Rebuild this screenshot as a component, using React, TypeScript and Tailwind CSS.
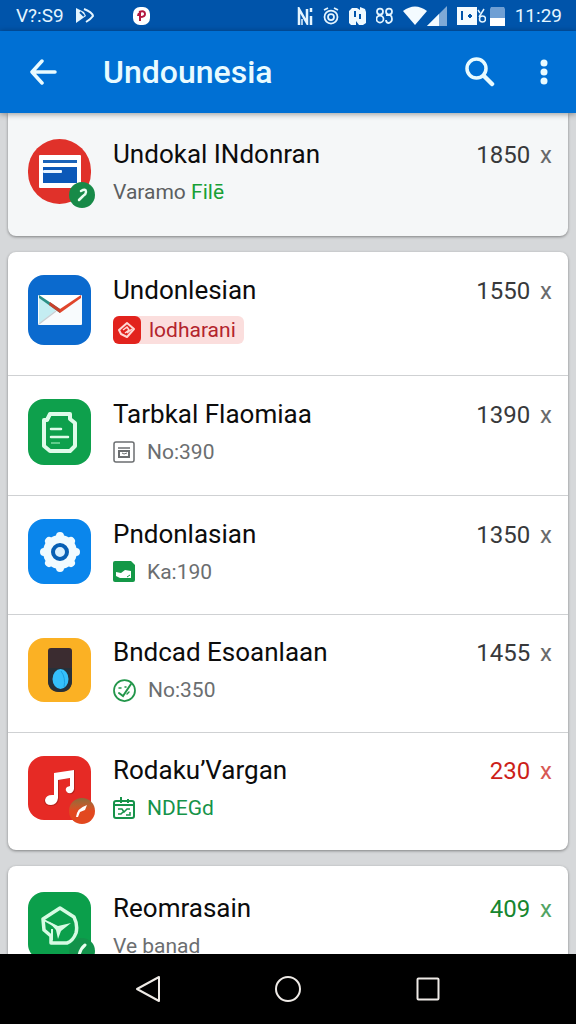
import type { ReactNode } from 'react';
import clsx from 'clsx';

interface AppEntry {
  name: string;
  count: string;
  countColor?: string;
  tile: string;
  glyph: ReactNode;
  badge?: ReactNode;
  detail: ReactNode;
}

/* ---------- tile glyphs ---------- */

function WindowGlyph() {
  return (
    <svg width="42" height="33" viewBox="0 0 42 33">
      <rect width="42" height="33" rx="1" fill="#fff" />
      <rect x="4" y="5" width="34" height="3" fill="#1b63b8" />
      <rect x="4" y="12" width="34" height="16" fill="#0b58b8" />
      <rect x="4" y="15" width="19" height="3" rx="1" fill="#e8f4ff" />
    </svg>
  );
}

function MailGlyph() {
  return (
    <svg width="44" height="30" viewBox="0 0 44 30">
      <rect width="44" height="30" rx="1" fill="#f8fbfd" />
      <path d="M1 1v28l17-14z" fill="#c4edf2" />
      <path d="M1 29l17-13" stroke="#c9ced2" strokeWidth="1.5" />
      <path d="M1 0h42L22 16z" fill="#fff" />
      <path d="M1 0l21 14v4L1 3z" fill="#2b8f86" />
      <path d="M12 7l10 7v4l-11-8z" fill="#c8412b" />
      <path d="M43 0L22 14v4L43 3z" fill="#e0452b" />
    </svg>
  );
}

function DocumentGlyph() {
  return (
    <svg width="35" height="41" viewBox="0 0 35 41" fill="none" stroke="#dffbe9" strokeLinejoin="round">
      <path d="M8 2h20v5l5 4v23l-5 5H8l-6-5V8h3z" strokeWidth="4" />
      <path d="M9 17h10M9 25h17" strokeWidth="2.5" strokeLinecap="round" />
      <path d="M9 31h9" strokeWidth="1.5" stroke="#7ddba0" />
    </svg>
  );
}

function GearGlyph() {
  return (
    <svg width="42" height="42" viewBox="0 0 42 42">
      <circle cx="21" cy="21" r="17" fill="#f1fbff" />
      <path d="M21 5v32M5 21h32M10 10l22 22M32 10L10 32" stroke="#f1fbff" strokeWidth="8" strokeLinecap="round" />
      <circle cx="21" cy="21" r="7" fill="#d9f0ff" stroke="#075fb4" strokeWidth="4" />
    </svg>
  );
}

function SwitchGlyph() {
  return (
    <svg width="26" height="44" viewBox="0 0 26 44">
      <path d="M4 0h18q3 0 3 3v29q0 12-12 12T1 32V3q0-3 3-3z" fill="#3b2c30" />
      <path d="M1 20h24v12q0 12-12 12T1 32z" fill="#273039" />
      <ellipse cx="13.5" cy="31" rx="8" ry="10" fill="#35c0fb" />
      <path d="M14 23q5 7 3 16" stroke="#1c9fe0" fill="none" />
    </svg>
  );
}

function MusicGlyph() {
  return (
    <svg width="31" height="37" viewBox="0 0 31 37">
      <path d="M10 4l21-4v20q-1 5-6 4-5-3-1-7l3-1V8l-12 2v19q-1 7-8 7-6 0-7-5 1-5 8-6l2 0z" fill="#b8221d" />
      <path d="M10 3l20-3v19q-1 5-6 4-4-3-1-6l3-1V8l-12 2v18q-1 7-7 7-6 0-6-5 1-5 7-5h2z" fill="#fff" />
    </svg>
  );
}

function CubeGlyph() {
  return (
    <svg width="38" height="40" viewBox="0 0 38 40" fill="none" stroke="#d6fbe3" strokeLinejoin="round">
      <path d="M19 2l14 9q4 8 2 16-3 8-9 10H10v-7l-7-6-1-11z" strokeWidth="3.5" />
      <path d="M3 14l14 8M11 23v11" strokeWidth="2" />
      <path d="M7 15l10 5 13-3-10 8-3 8-2-9z" fill="#d6fbe3" stroke="none" />
    </svg>
  );
}

/* ---------- corner badges ---------- */

function Badge({ className, children }: { className: string; children: ReactNode }) {
  return (
    <span className={clsx('absolute -right-1 -bottom-1 flex size-6.5 items-center justify-center rounded-full', className)}>
      {children}
    </span>
  );
}

function HookMark() {
  return (
    <svg width="12" height="14" viewBox="0 0 12 14" fill="none" stroke="#e9fff0" strokeLinecap="round">
      <path d="M5 3q5-3 5 1 0 2-3 4l-4 4" strokeWidth="2.5" />
    </svg>
  );
}

function LeafMark() {
  return (
    <svg width="14" height="14" viewBox="0 0 14 14">
      <path d="M1 13q1-9 11-12l-2 5-5 2-2 5z" fill="#fff" />
    </svg>
  );
}

function SlashMark() {
  return (
    <svg width="12" height="16" viewBox="0 0 12 16" fill="none" stroke="#e9fff0" strokeLinecap="round">
      <path d="M9 2Q4 6 3 13" strokeWidth="3" />
    </svg>
  );
}

/* ---------- small icons of the second line ---------- */

function TagIcon() {
  return (
    <svg width="20" height="20" viewBox="0 0 20 20" fill="none" stroke="#ffd9d5" strokeWidth="2" strokeLinejoin="round">
      <path d="M2 10L10 3l7 6-7 8-6-3z" />
      <path d="M6 10l4-3 2 3-4 3M10 13l5-4" strokeWidth="1.5" />
    </svg>
  );
}

function NoteIcon() {
  return (
    <svg width="22" height="22" viewBox="0 0 22 22" fill="none" stroke="#6b6e70">
      <rect x="1" y="1" width="20" height="20" rx="2" strokeWidth="1.5" />
      <path d="M5 7h12" strokeWidth="1.5" />
      <rect x="6" y="10" width="10" height="6" strokeWidth="2" />
      <path d="M9 12l2 1 3-1" />
    </svg>
  );
}

function PhotoIcon() {
  return (
    <svg width="22" height="21" viewBox="0 0 22 21">
      <path d="M2 0h16l4 4v15q0 2-2 2H2q-2 0-2-2V2q0-2 2-2z" fill="#149847" />
      <path d="M3 11l5 1 4-3 6 1v7H7l-4-2z" fill="#fff" />
      <path d="M14 16l3-2" stroke="#149847" />
    </svg>
  );
}

function CheckCircleIcon() {
  return (
    <svg width="23" height="23" viewBox="0 0 23 23" fill="none" stroke="#22964a" strokeLinecap="round">
      <circle cx="11.5" cy="11.5" r="10.5" strokeWidth="1.75" />
      <path d="M6 14l4 3L18 5" strokeWidth="2" />
      <path d="M6 9h2M12 8h1M14 15l2-2" strokeWidth="1.5" />
    </svg>
  );
}

function CalendarIcon() {
  return (
    <svg width="22" height="22" viewBox="0 0 22 22" fill="none" stroke="#16934a" strokeWidth="2">
      <rect x="1" y="4" width="20" height="17" rx="2" />
      <path d="M1 8h20M8 0v6M15 2v4" />
      <path d="M5 12h4l2 3 3-3h3M5 17h3l2-2M13 18h4v-3" strokeWidth="1.5" />
    </svg>
  );
}

function Detail({ icon, className, children }: { icon?: ReactNode; className?: string; children: ReactNode }) {
  return (
    <p className={clsx('flex h-6 items-center gap-3 text-[21px] leading-6', className ?? 'text-[#6b6e70]')}>
      {icon}
      {children}
    </p>
  );
}

/* ---------- data ---------- */

const pinned: AppEntry[] = [
  {
    name: 'Undokal INdonran',
    count: '1850',
    tile: 'h-[65px] rounded-full bg-[#e0312a]',
    glyph: <WindowGlyph />,
    badge: <Badge className="bg-[#178a48]"><HookMark /></Badge>,
    detail: (
      <p className="text-[21px] leading-6 text-[#5c5f61]">
        Varamo <span className="text-[#18a035]">Filē</span>
      </p>
    ),
  },
];

const installed: AppEntry[] = [
  {
    name: 'Undonlesian',
    count: '1550',
    tile: 'h-[70px] rounded-2xl bg-[#0b6ace]',
    glyph: <MailGlyph />,
    detail: (
      <p className="flex h-7 w-fit items-center gap-2 rounded-md bg-[#fbdedd] pr-2 text-[21px] leading-7 text-[#b3242c]">
        <span className="flex size-7 items-center justify-center rounded-md bg-[#e2231d]">
          <TagIcon />
        </span>
        lodharani
      </p>
    ),
  },
  {
    name: 'Tarbkal Flaomiaa',
    count: '1390',
    tile: 'h-[66px] rounded-2xl bg-[#0ea04c]',
    glyph: <DocumentGlyph />,
    detail: <Detail icon={<NoteIcon />}>No:390</Detail>,
  },
  {
    name: 'Pndonlasian',
    count: '1350',
    tile: 'h-[65px] rounded-2xl bg-[#0a86ec]',
    glyph: <GearGlyph />,
    detail: <Detail icon={<PhotoIcon />}>Ka:190</Detail>,
  },
  {
    name: 'Bndcad Esoanlaan',
    count: '1455',
    tile: 'h-[64px] rounded-2xl bg-[#fbb124]',
    glyph: <SwitchGlyph />,
    detail: <Detail icon={<CheckCircleIcon />}>No:350</Detail>,
  },
  {
    name: 'Rodaku’Vargan',
    count: '230',
    countColor: 'text-[#cc1f1a]',
    tile: 'h-[64px] rounded-2xl bg-[#e62a25]',
    glyph: <MusicGlyph />,
    badge: <Badge className="bg-linear-to-b from-[#8a6a3a] to-[#e2481f] to-50%"><LeafMark /></Badge>,
    detail: <Detail icon={<CalendarIcon />} className="text-[#16934a]">NDEGd</Detail>,
  },
];

const updates: AppEntry[] = [
  {
    name: 'Reomrasain',
    count: '409',
    countColor: 'text-[#16862f]',
    tile: 'h-[68px] rounded-2xl bg-[#0b9f4b]',
    glyph: <CubeGlyph />,
    badge: <Badge className="bg-[#12924a]"><SlashMark /></Badge>,
    detail: <Detail>Ve banad</Detail>,
  },
];

/* ---------- layout ---------- */

function AppRow({ entry }: { entry: AppEntry }) {
  return (
    <li className="flex items-center gap-5.5 pt-[23px] pr-4 pb-[30px] pl-5">
      <div className={clsx('relative flex w-[63px] shrink-0 items-center justify-center', entry.tile)}>
        {entry.glyph}
        {entry.badge}
      </div>
      <div className="flex min-w-0 flex-1 flex-col gap-[11px]">
        <div className="flex items-baseline justify-between">
          <h2 className="text-[26px] leading-7 text-[#0c0c0c]">{entry.name}</h2>
          <p className={clsx('text-2xl leading-7', entry.countColor ?? 'text-[#38393b]')}>
            {entry.count} <span className="ml-1 opacity-75">x</span>
          </p>
        </div>
        {entry.detail}
      </div>
    </li>
  );
}

function Card({ entries, className }: { entries: AppEntry[]; className: string }) {
  return (
    <ul className={clsx('shrink-0 divide-y divide-[#cfd1d3] shadow-[0_1px_3px_rgba(0,0,0,0.4)]', className)}>
      {entries.map((entry) => (
        <AppRow key={entry.name} entry={entry} />
      ))}
    </ul>
  );
}

function StatusBar() {
  return (
    <div className="flex h-[31px] shrink-0 items-center bg-[#0054aa] pr-3.5 pl-4 text-[19px] leading-none text-[#e4f5ff]">
      <span>V?:S9</span>
      <svg className="ml-3" width="18" height="15" viewBox="0 0 18 15">
        <path d="M0 0l8 4 2 4-10 7z" fill="#e4f5ff" />
        <path d="M4 4l4 4" stroke="#0054aa" strokeWidth="2" />
        <path d="M8 1q8 3 9 7-2 3-7 6" fill="none" stroke="#e4f5ff" strokeWidth="2" />
      </svg>
      <svg className="ml-[39px]" width="17" height="18" viewBox="0 0 17 18">
        <rect width="17" height="18" rx="7" fill="#fff" />
        <path d="M7 14V6q-2 1-2 3M6 5q6-2 6 2 0 3-5 3" fill="none" stroke="#b3173f" strokeWidth="2" />
      </svg>

      <div className="ml-auto flex items-center gap-2.5">
        <svg width="16" height="18" viewBox="0 0 16 18" fill="none" stroke="#e4f5ff" strokeWidth="2.5">
          <path d="M2 18V2l8 14V2M14 1v4M14 9v9" />
          <path d="M5 12v6" strokeWidth="1.5" />
        </svg>
        <svg width="16" height="18" viewBox="0 0 16 18" fill="none" stroke="#e4f5ff" strokeWidth="1.75">
          <circle cx="8" cy="10" r="6.5" />
          <circle cx="8" cy="10" r="3" />
          <path d="M1 3l4-2M11 1l4 2" />
        </svg>
        <svg width="17" height="18" viewBox="0 0 17 18">
          <path d="M3 1h5l3 2V0l5 2 1 3v11l-3 2h-4l-3-4v4H2l-2-2V4z" fill="#f0faff" />
          <path d="M6 4v6M11 7v5" stroke="#0054aa" strokeWidth="2" />
        </svg>
        <svg width="17" height="17" viewBox="0 0 17 17" fill="none" stroke="#e4f5ff" strokeWidth="1.75">
          <circle cx="4" cy="4.5" r="3" />
          <circle cx="4" cy="12" r="3.5" />
          <circle cx="13" cy="4.5" r="3" />
          <path d="M10 8h4q2 1 2 4 0 3-3 4-3 0-3-3" />
        </svg>
        <div className="flex items-center">
          <svg width="24" height="19" viewBox="0 0 24 19">
            <path d="M0 5q12-9 24 0L12 19z" fill="#f4fbff" />
          </svg>
          <svg width="20" height="20" viewBox="0 0 20 20">
            <path d="M0 20L20 0v20z" fill="#7fa9d6" />
            <path d="M0 20L12 8v12z" fill="#f4fbff" />
          </svg>
        </div>
        <div className="flex items-center gap-1">
          <svg width="29" height="18" viewBox="0 0 29 18">
            <rect width="20" height="18" fill="#f4fbff" />
            <path d="M5 4v9M11 9h4M13 7v4" stroke="#0054aa" strokeWidth="2" />
            <path d="M21 3l2 3M27 2l-5 8" stroke="#e4f5ff" strokeWidth="1.5" />
            <circle cx="25.5" cy="12" r="3" fill="none" stroke="#e4f5ff" strokeWidth="1.5" />
          </svg>
          <svg width="15" height="20" viewBox="0 0 15 20">
            <path d="M1 1h13l1 2v9H0V3z" fill="#6f9fd4" />
            <path d="M0 12h15v8H0z" fill="#fff" />
          </svg>
        </div>
        <span>11:29</span>
      </div>
    </div>
  );
}

function Toolbar() {
  return (
    <header className="relative z-10 flex h-[82px] shrink-0 items-center bg-[#0070d4] pr-3 pl-[23px] text-[#e9fbff] shadow-[0_1px_6px_rgba(0,0,0,0.4)]">
      <button type="button" aria-label="Back" className="flex size-10 items-center justify-center">
        <svg width="28" height="26" viewBox="0 0 28 26" fill="none" stroke="currentColor" strokeWidth="3.5" strokeLinecap="round" strokeLinejoin="round">
          <path d="M13 2L3 13l10 11M4 13h22" />
        </svg>
      </button>
      <h1 className="ml-10 flex-1 text-[32px] leading-10 font-medium">Undounesia</h1>
      <button type="button" aria-label="Search" className="flex size-10 items-center justify-center">
        <svg width="30" height="30" viewBox="0 0 30 30" fill="none" stroke="currentColor" strokeLinecap="round">
          <circle cx="11.5" cy="11.5" r="9.5" strokeWidth="3.5" />
          <path d="M19 19l8 8" strokeWidth="4.5" />
        </svg>
      </button>
      <button type="button" aria-label="More options" className="ml-6 flex size-10 items-center justify-center">
        <svg width="8" height="26" viewBox="0 0 8 26" fill="currentColor">
          <circle cx="4" cy="4" r="3.5" />
          <circle cx="4" cy="13" r="3.5" />
          <circle cx="4" cy="22" r="3.5" />
        </svg>
      </button>
    </header>
  );
}

function NavigationBar() {
  return (
    <nav className="relative z-10 flex h-[70px] shrink-0 items-center justify-center bg-black text-[#eeeae6]">
      <button type="button" aria-label="Back" className="flex h-full w-35 items-center justify-center">
        <svg width="24" height="28" viewBox="0 0 24 28" fill="none" stroke="currentColor" strokeWidth="2" strokeLinejoin="round">
          <path d="M23 2v24L1 14z" />
        </svg>
      </button>
      <button type="button" aria-label="Home" className="flex h-full w-35 items-center justify-center">
        <svg width="28" height="28" viewBox="0 0 28 28" fill="none" stroke="currentColor" strokeWidth="2">
          <circle cx="14" cy="14" r="12" />
        </svg>
      </button>
      <button type="button" aria-label="Recent apps" className="flex h-full w-35 items-center justify-center">
        <svg width="24" height="24" viewBox="0 0 24 24" fill="none" stroke="currentColor" strokeWidth="2">
          <rect x="1.5" y="1.5" width="21" height="21" rx="1" />
        </svg>
      </button>
    </nav>
  );
}

export default function App() {
  return (
    <div className="flex h-screen flex-col bg-[#d6d8da] font-[Roboto,sans-serif]">
      <StatusBar />
      <Toolbar />
      <main className="flex min-h-0 flex-1 flex-col gap-4 overflow-hidden px-2">
        <Card entries={pinned} className="rounded-b-lg bg-[#f5f7f8] pt-[3px] pb-0.5" />
        <Card entries={installed} className="rounded-lg bg-white" />
        <Card entries={updates} className="rounded-lg bg-white pt-[3px]" />
      </main>
      <NavigationBar />
    </div>
  );
}
